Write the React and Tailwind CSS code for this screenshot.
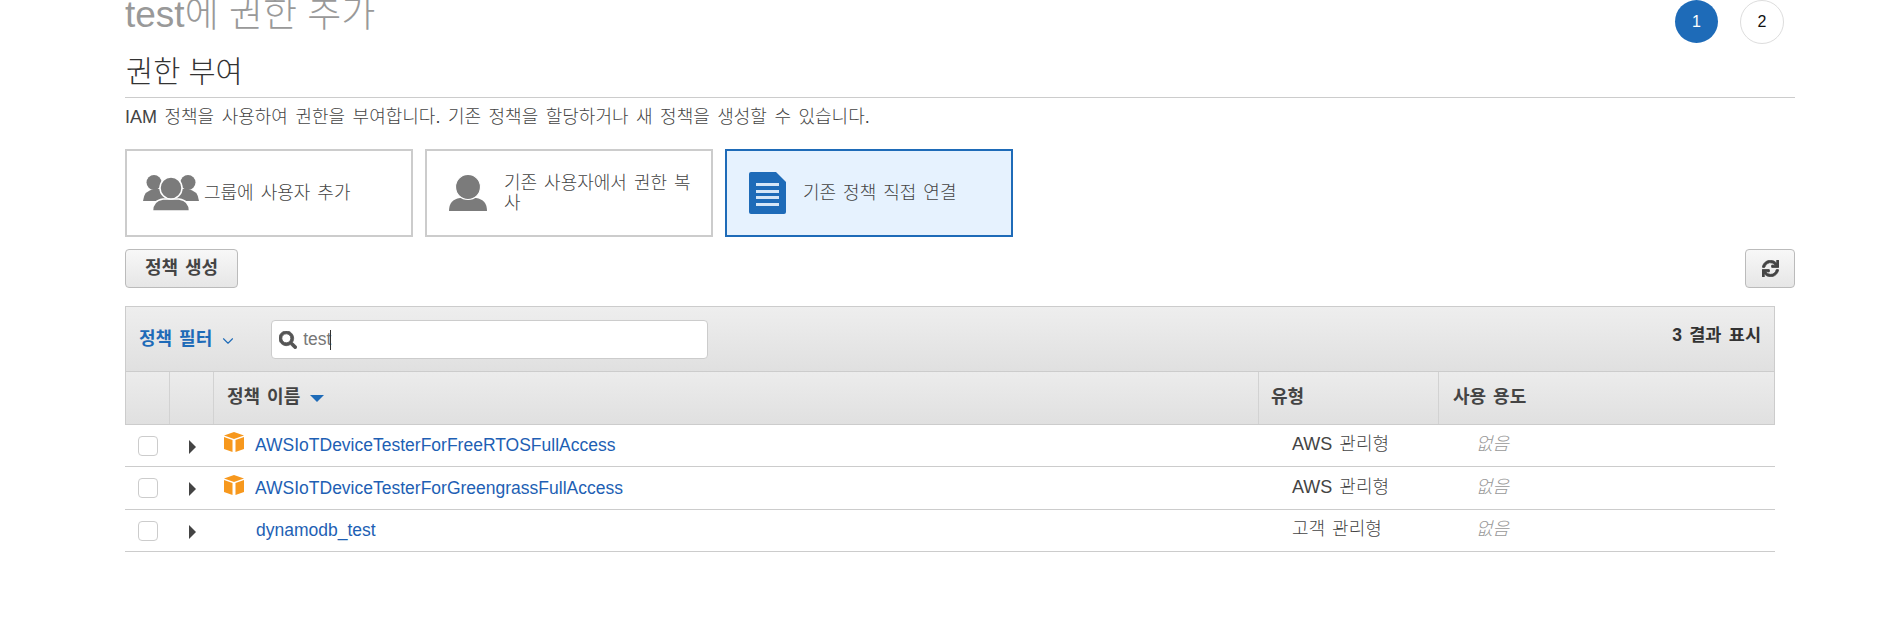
import { ChevronDown } from 'lucide-react';
import { FaSearch, FaSync } from 'react-icons/fa';

const FONT = 'font-["Liberation_Sans","Noto_Sans_CJK_KR",sans-serif]';

const policies = [
  { name: 'AWSIoTDeviceTesterForFreeRTOSFullAccess', type: 'AWS 관리형', managed: true, h: 'h-[42px]' },
  { name: 'AWSIoTDeviceTesterForGreengrassFullAccess', type: 'AWS 관리형', managed: true, h: 'h-[43px]' },
  { name: 'dynamodb_test', type: '고객 관리형', managed: false, h: 'h-[42px]' },
];

function GroupIcon() {
  return (
    <svg width="56" height="36" viewBox="0 0 56 36" fill="#7b7b7b" stroke="#fff">
      <circle cx="11" cy="7.5" r="7.5" stroke="none" />
      <circle cx="45" cy="7.5" r="7.5" stroke="none" />
      <path d="M0 26 Q1 15 12 14 L44 14 Q55 15 56 26 Z" stroke="none" />
      <path d="M9.5 36 Q9.5 25.5 20 24 L36 24 Q46.5 25.5 46.5 36 Z" strokeWidth="1.5" />
      <circle cx="28" cy="13" r="11" strokeWidth="1.5" />
    </svg>
  );
}

function UserIcon() {
  return (
    <svg width="38" height="36" viewBox="0 0 38 36" fill="#7b7b7b" stroke="#fff">
      <path d="M0 36 Q0 24.5 11 23 L27 23 Q38 24.5 38 36 Z" stroke="none" />
      <circle cx="19" cy="12" r="12.5" strokeWidth="1.2" />
    </svg>
  );
}

function DocIcon() {
  return (
    <svg width="37" height="42" viewBox="0 0 37 42">
      <path d="M2 0 L27 0 L37 10 L37 40 Q37 42 35 42 L2 42 Q0 42 0 40 L0 2 Q0 0 2 0 Z" fill="#1e6bb8" />
      <rect x="7" y="11" width="23" height="3" fill="#d5e6f7" />
      <rect x="7" y="18" width="23" height="3" fill="#d5e6f7" />
      <rect x="7" y="24" width="23" height="3" fill="#d5e6f7" />
      <rect x="7" y="31" width="23" height="3" fill="#d5e6f7" />
    </svg>
  );
}

function CubeIcon() {
  return (
    <svg width="20" height="20" viewBox="0 0 20 20" fill="#f7981d">
      <path d="M10 0 L20 3.5 L10 7 L0 3.5 Z" />
      <path d="M0 5 L8.5 8 L8.5 20 L0 17 Z" />
      <path d="M20 5 L11.5 8 L11.5 20 L20 17 Z" />
    </svg>
  );
}

function Card({ icon, label, active, iconBox, textClass }) {
  return (
    <div className={`flex w-[288px] h-[88px] items-center border-2 ${active ? 'border-[#1e6bb8] bg-[#e6f2fe]' : 'border-[#ccc] bg-white'}`}>
      <div className={iconBox}>{icon}</div>
      <div className={`text-[18px] leading-[20px] font-light text-[#444] [word-spacing:2px] ${textClass}`}>{label}</div>
    </div>
  );
}

function PolicyRow({ row }) {
  return (
    <div className={`flex ${row.h} border-b border-[#ccc] text-[17.5px]`}>
      <div className="flex w-[44px] items-center pl-[13px]">
        <div className="h-[20px] w-[20px] rounded-[4px] border border-[#ccc] bg-white" />
      </div>
      <div className="flex w-[44px] items-center pl-[20px]">
        <div className="mt-[2px] h-0 w-0 border-y-[7px] border-l-[7px] border-y-transparent border-l-[#444]" />
      </div>
      <div className="flex w-[1046px] items-center">
        <div className="mb-[7px] ml-[11px] w-[20px] shrink-0">{row.managed && <CubeIcon />}</div>
        <a className={`${row.managed ? 'ml-[11px]' : 'ml-[12px]'} text-[#1e5fb4]`}>{row.name}</a>
      </div>
      <div className="flex w-[180px] items-center pl-[33px] pb-[2px] text-[18px] font-light text-[#444] [word-spacing:2px]">{row.type}</div>
      <div className="flex items-center pl-[37px] pb-[2px] text-[18px] font-light italic text-[#999]">없음</div>
    </div>
  );
}

export default function App() {
  return (
    <div className={`${FONT} h-[628px] w-[1878px] overflow-hidden bg-white pl-[125px] pr-[83px]`}>
      <div className="flex h-[50px] items-start justify-between">
        <h1 className="-mt-[8px] text-[37px] leading-[46px] font-light text-[#999]">test에 권한 추가</h1>
        <div className="mr-[11px] flex gap-[22px]">
          <div className="flex h-[43px] w-[43px] items-center justify-center rounded-full bg-[#1e6bb8] text-[16px] text-white">1</div>
          <div className="flex h-[44px] w-[44px] items-center justify-center rounded-full border border-[#ddd] text-[16px] text-[#111]">2</div>
        </div>
      </div>
      <h2 className="h-[48px] border-b border-[#ccc] pt-[2px] pl-px text-[29.5px] leading-[40px] font-light text-[#333]">권한 부여</h2>
      <p className="mt-[7px] text-[18px] leading-[24px] font-light text-[#444] [word-spacing:2.5px]">IAM 정책을 사용하여 권한을 부여합니다. 기존 정책을 할당하거나 새 정책을 생성할 수 있습니다.</p>

      <div className="mt-[20px] flex gap-[12px]">
        <Card icon={<GroupIcon />} label="그룹에 사용자 추가" iconBox="ml-[16px] mr-[5px]" />
        <Card icon={<UserIcon />} label="기존 사용자에서 권한 복사" iconBox="ml-[22px] mr-[17px]" textClass="w-[190px]" />
        <Card icon={<DocIcon />} label="기존 정책 직접 연결" active iconBox="ml-[22px] mr-[17px]" />
      </div>

      <div className="mt-[12px] flex justify-between">
        <button className="h-[39px] w-[113px] rounded-[4px] border border-[#bbb] bg-gradient-to-b from-[#f8f8f8] to-[#e6e6e6] text-[18px] font-bold text-[#444] [word-spacing:2px]">정책 생성</button>
        <button className="flex h-[39px] w-[50px] items-center justify-center rounded-[4px] border border-[#bbb] bg-gradient-to-b from-[#f8f8f8] to-[#e6e6e6] text-[#444]">
          <FaSync size={17} className="stroke-current stroke-[24]" />
        </button>
      </div>

      <div className="mt-[18px] w-[1650px]">
        <div className="flex h-[65px] items-start justify-between border border-[#ccc] border-b-0 bg-gradient-to-b from-[#eee] to-[#e0e0e0] pl-[13px] pr-[13px]">
          <div className="flex items-center pt-[13px]">
            <span className="text-[18px] font-semibold text-[#1e6bb8] [word-spacing:2px]">정책 필터</span>
            <ChevronDown size={18} strokeWidth={1.5} className="ml-[7px] mt-[2px] text-[#1e6bb8]" />
            <div className="ml-[34px] flex h-[39px] w-[437px] items-center rounded-[4px] border border-[#ccc] bg-white pl-[7px]">
              <FaSearch size={18} className="stroke-current stroke-[24] text-[#555]" />
              <span className="ml-[6px] text-[17.5px] text-[#777]">test</span>
              <span className="-ml-px h-[20px] w-px bg-[#333]" />
            </div>
          </div>
          <span className="pt-[15px] text-[17.5px] font-bold text-[#333] [word-spacing:2.5px]">3 결과 표시</span>
        </div>
        <div className="flex h-[54px] border border-[#ccc] bg-gradient-to-b from-[#ececec] to-[#e0e0e0] text-[18px] font-bold text-[#444] [word-spacing:2px]">
          <div className="w-[44px] border-r border-[#d2d2d2]" />
          <div className="w-[44px] border-r border-[#d2d2d2]" />
          <div className="flex w-[1045px] items-center border-r border-[#d2d2d2] pl-[13px] pb-[2px]">
            정책 이름
            <span className="ml-[10px] mt-[3px] h-0 w-0 border-x-[7px] border-t-[7px] border-x-transparent border-t-[#1e6bb8]" />
          </div>
          <div className="flex w-[180px] items-center border-r border-[#d2d2d2] pl-[12px] pb-[2px]">유형</div>
          <div className="flex items-center pl-[14px] pb-[2px]">사용 용도</div>
        </div>
        {policies.map(row => (
          <PolicyRow key={row.name} row={row} />
        ))}
      </div>
    </div>
  );
}
